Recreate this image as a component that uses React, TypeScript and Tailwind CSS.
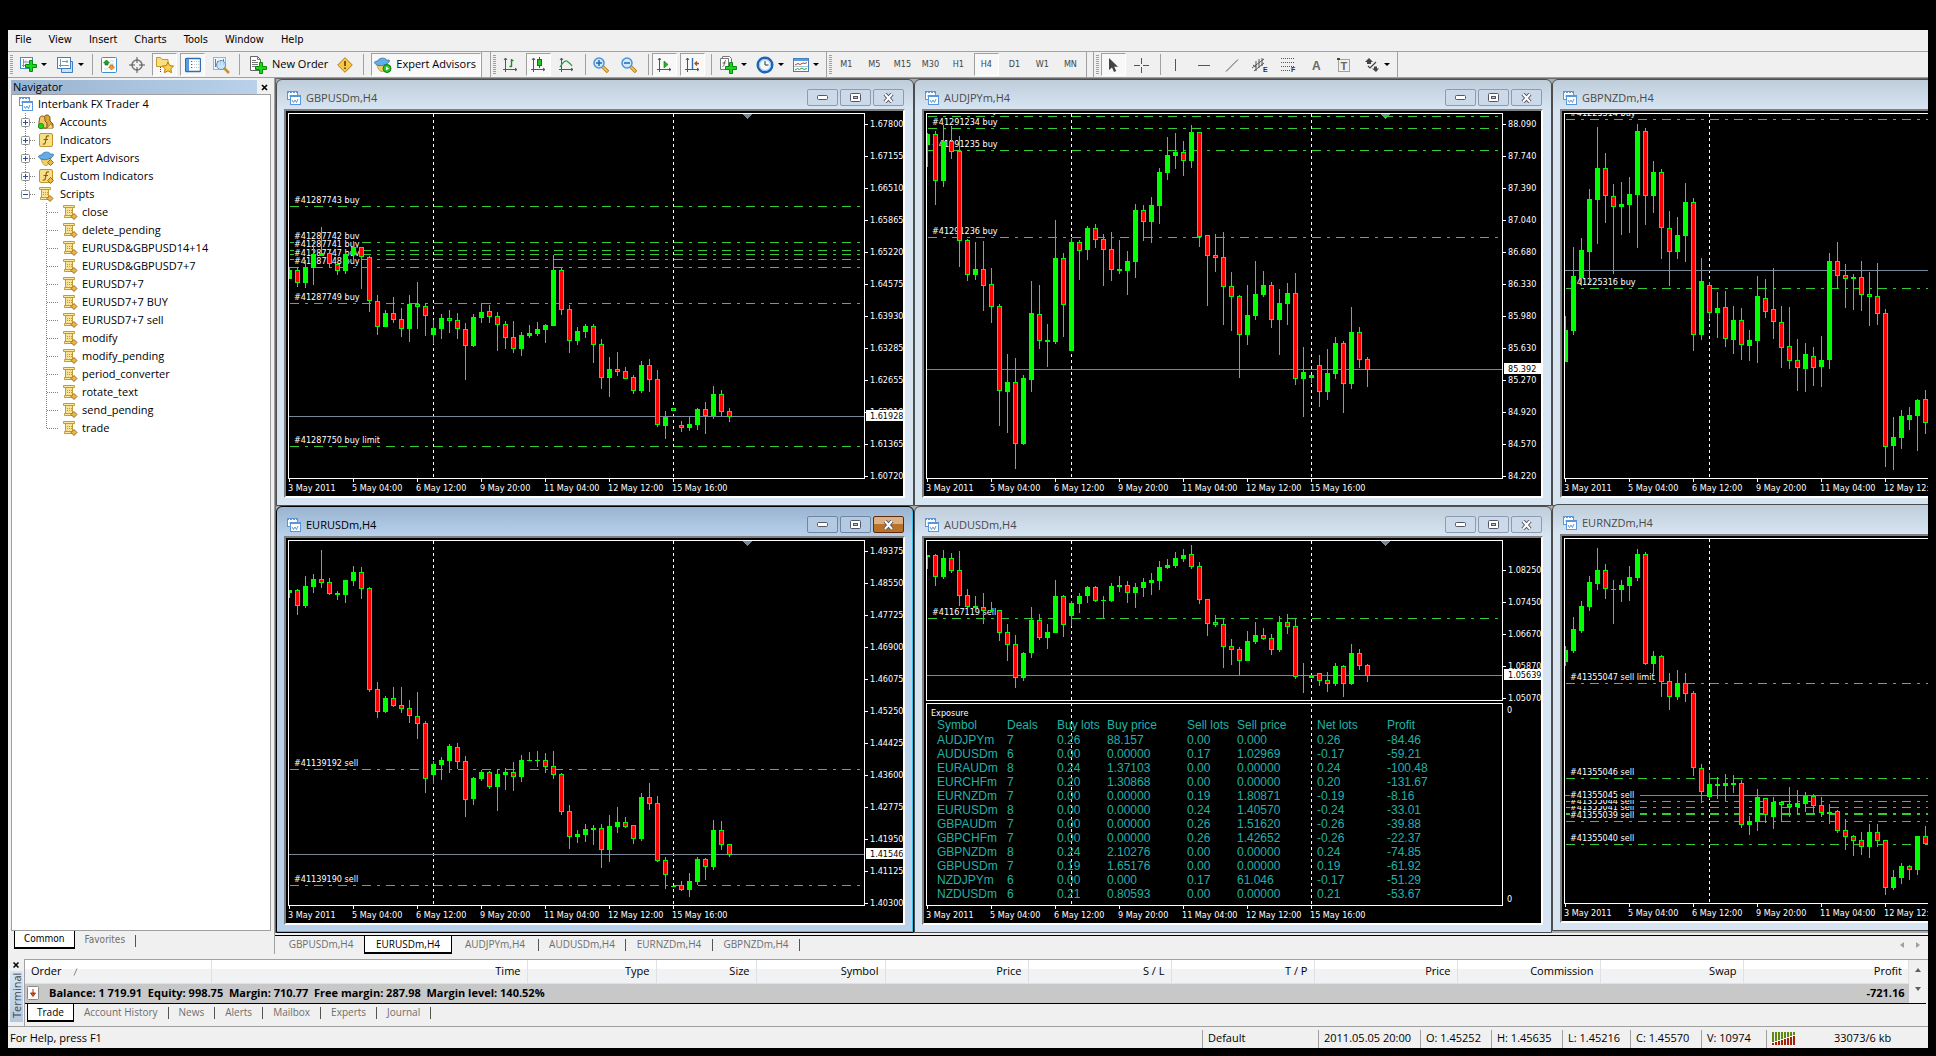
import React, { useState } from "react";

type Candle = [number, number, number, number, number];

type Order = { y: number; label?: string };

type ChartData = {
  symbol: string;
  origin: number;
  price: number;
  priceLabel?: string;
  scale: string[];
  scaleStart: number;
  orders: Order[];
  candles: Candle[];
  exposure?: boolean;
};

// Candle rows are [high, body top, body bottom, low, rising] in thirds of a pixel
const gbpusd: ChartData = {
  symbol: "GBPUSDm,H4",
  origin: 93,
  price: 1009,
  priceLabel: "1.61928",
  scale: ["1.67800", "1.67155", "1.66510", "1.65865", "1.65220", "1.64575", "1.63930", "1.63285", "1.62655", "1.62010", "1.61365", "1.60720"],
  scaleStart: 131,
  orders: [
    { y: 379, label: "#41287743 buy" },
    { y: 487, label: "#41287742 buy" },
    { y: 511, label: "#41287741 buy" },
    { y: 523 },
    { y: 538, label: "#41287747 buy" },
    { y: 562, label: "#41287748 buy" },
    { y: 670, label: "#41287749 buy" },
    { y: 1099, label: "#41287750 buy limit" },
  ],
  candles: [
    [562, 570, 597, 597, 1], [562, 570, 608, 620, 0], [540, 561, 608, 623, 1], [487, 522, 563, 614, 1],
    [441, 519, 527, 527, 1], [508, 519, 551, 563, 0], [545, 551, 574, 584, 0], [515, 522, 572, 581, 1],
    [484, 502, 524, 540, 1], [500, 502, 532, 627, 0], [528, 532, 664, 696, 0], [645, 664, 740, 766, 0],
    [690, 699, 740, 740, 1], [651, 699, 719, 729, 0], [684, 718, 746, 771, 0], [645, 672, 746, 786, 1],
    [606, 673, 681, 747, 0], [670, 679, 707, 768, 0], [720, 744, 765, 792, 1], [702, 714, 746, 777, 1],
    [690, 714, 722, 759, 0], [699, 720, 748, 777, 0], [729, 748, 797, 900, 0], [702, 711, 797, 800, 1],
    [670, 697, 713, 729, 1], [675, 693, 710, 729, 0], [697, 709, 734, 813, 0], [723, 733, 773, 807, 0],
    [723, 772, 808, 819, 0], [757, 766, 808, 828, 1], [735, 759, 767, 773, 1], [726, 747, 762, 768, 1],
    [732, 735, 750, 789, 1], [525, 570, 738, 738, 1], [563, 570, 689, 705, 0], [675, 688, 782, 819, 0],
    [741, 753, 782, 795, 1], [732, 738, 755, 774, 1], [732, 738, 794, 849, 0], [777, 793, 893, 927, 0],
    [831, 867, 893, 951, 1], [816, 867, 875, 887, 0], [861, 874, 896, 896, 0], [885, 891, 932, 942, 0],
    [843, 855, 932, 938, 1], [837, 855, 899, 936, 0], [870, 898, 1034, 1041, 0], [993, 1010, 1037, 1077, 1],
    [985, 985, 993, 993, 0], [1023, 1035, 1043, 1055, 0], [1010, 1033, 1043, 1053, 1], [984, 988, 1034, 1050, 1],
    [966, 988, 1007, 1062, 0], [918, 942, 1008, 1017, 1], [930, 942, 995, 1008, 0], [984, 993, 1010, 1025, 0],
  ],
};

const audjpy: ChartData = {
  symbol: "AUDJPYm,H4",
  origin: 93,
  price: 868,
  priceLabel: "85.392",
  scale: ["88.090", "87.740", "87.390", "87.040", "86.680", "86.330", "85.980", "85.630", "85.270", "84.920", "84.570", "84.220"],
  scaleStart: 131,
  orders: [
    { y: 109, label: "#41291233 buy" },
    { y: 145, label: "#41291234 buy" },
    { y: 211, label: "#41291235 buy" },
    { y: 472, label: "#41291236 buy" },
  ],
  candles: [
    [159, 162, 195, 261, 1], [152, 162, 302, 375, 0], [135, 183, 302, 320, 1], [137, 183, 215, 237, 0],
    [168, 212, 482, 561, 0], [477, 480, 584, 603, 0], [486, 567, 585, 600, 1], [483, 567, 617, 693, 0],
    [563, 612, 680, 729, 0], [672, 679, 932, 1038, 0], [822, 906, 936, 1059, 1], [834, 906, 1091, 1167, 0],
    [885, 894, 1091, 1095, 1], [603, 699, 900, 936, 1], [615, 703, 782, 807, 0], [732, 780, 787, 861, 1],
    [420, 534, 786, 792, 1], [519, 534, 674, 771, 0], [474, 486, 812, 812, 1], [480, 486, 512, 600, 0],
    [438, 444, 510, 540, 1], [432, 444, 479, 504, 0], [462, 477, 509, 618, 0], [456, 507, 570, 603, 0],
    [480, 567, 573, 582, 1], [513, 543, 573, 645, 1], [372, 390, 546, 594, 1], [375, 390, 426, 483, 0],
    [351, 375, 426, 489, 1], [264, 276, 378, 432, 1], [171, 225, 279, 300, 1], [159, 216, 228, 267, 1],
    [183, 216, 242, 288, 0], [135, 156, 242, 264, 1], [156, 156, 470, 501, 0], [464, 466, 527, 678, 0],
    [462, 525, 533, 576, 0], [456, 531, 620, 735, 0], [576, 618, 650, 753, 0], [645, 648, 765, 894, 0],
    [615, 705, 765, 795, 1], [543, 642, 708, 720, 1], [573, 615, 645, 651, 1], [606, 615, 719, 744, 0],
    [627, 669, 719, 825, 1], [609, 639, 671, 735, 1], [579, 639, 896, 915, 0], [801, 876, 896, 1011, 1],
    [885, 885, 894, 909, 1], [825, 855, 936, 981, 0], [807, 879, 936, 960, 1], [771, 789, 882, 897, 1],
    [783, 789, 911, 999, 0], [681, 756, 912, 927, 1], [741, 756, 839, 864, 0], [831, 838, 869, 921, 0],
  ],
};

const gbpnzd: ChartData = {
  symbol: "GBPNZDm,H4",
  origin: 93,
  price: 571,
  scale: [],
  scaleStart: 131,
  orders: [
    { y: 118, label: "#41225314 buy" },
    { y: 625, label: "#41225316 buy" },
  ],
  candles: [
    [708, 750, 846, 846, 1], [501, 588, 753, 765, 1], [474, 510, 594, 618, 1], [327, 357, 516, 606, 1],
    [141, 264, 360, 492, 1], [219, 264, 348, 429, 0], [312, 348, 381, 582, 0], [306, 372, 381, 465, 1],
    [291, 342, 375, 459, 1], [132, 153, 345, 504, 1], [144, 153, 348, 435, 0], [243, 276, 348, 399, 1],
    [267, 276, 444, 537, 0], [393, 444, 516, 618, 0], [411, 465, 516, 537, 1], [309, 366, 468, 546, 1],
    [354, 366, 765, 813, 0], [534, 603, 765, 780, 1], [606, 615, 699, 717, 0], [636, 684, 699, 774, 1],
    [633, 681, 777, 801, 0], [678, 720, 780, 822, 1], [684, 720, 795, 840, 0], [750, 780, 798, 843, 1],
    [588, 648, 783, 849, 1], [597, 654, 696, 714, 0], [564, 687, 726, 777, 0], [678, 726, 804, 864, 0],
    [681, 798, 843, 867, 0], [777, 840, 864, 933, 0], [789, 822, 867, 936, 1], [801, 828, 864, 918, 0],
    [768, 840, 861, 921, 1], [519, 543, 840, 867, 1], [486, 543, 588, 627, 0], [552, 585, 597, 684, 0],
    [582, 591, 597, 690, 1], [543, 591, 645, 693, 0], [576, 642, 651, 738, 0], [549, 648, 702, 735, 0],
    [687, 699, 1101, 1161, 0], [1011, 1071, 1098, 1170, 1], [990, 1008, 1074, 1107, 1], [981, 1005, 1020, 1050, 1],
    [957, 960, 1008, 1113, 1], [930, 957, 1029, 1062, 0],
  ],
};

const eurusd: ChartData = {
  symbol: "EURUSDm,H4",
  origin: 99,
  price: 1048,
  priceLabel: "1.41546",
  scale: ["1.49375", "1.48550", "1.47725", "1.46900", "1.46075", "1.45250", "1.44425", "1.43600", "1.42775", "1.41950", "1.41125", "1.40300"],
  scaleStart: 137,
  orders: [
    { y: 793, label: "#41139192 sell" },
    { y: 1141, label: "#41139190 sell" },
  ],
  candles: [
    [255, 255, 264, 279, 1], [252, 255, 302, 330, 0], [213, 243, 303, 309, 1], [207, 222, 246, 264, 1],
    [135, 222, 234, 249, 0], [219, 231, 267, 270, 0], [258, 264, 270, 285, 1], [225, 225, 270, 294, 1],
    [183, 201, 228, 243, 1], [186, 201, 251, 282, 0], [246, 249, 554, 561, 0], [531, 552, 620, 639, 0],
    [573, 579, 620, 624, 1], [546, 579, 602, 606, 0], [546, 600, 611, 624, 0], [585, 609, 633, 654, 0],
    [561, 633, 656, 702, 0], [648, 654, 822, 864, 0], [768, 777, 810, 837, 1], [756, 765, 780, 825, 1],
    [717, 723, 768, 804, 1], [714, 726, 770, 792, 0], [753, 768, 885, 936, 0], [816, 819, 882, 900, 1],
    [795, 801, 822, 828, 1], [798, 801, 846, 852, 0], [792, 807, 846, 918, 1], [789, 801, 810, 855, 1],
    [771, 801, 816, 858, 0], [750, 765, 816, 831, 1], [741, 765, 768, 768, 1], [738, 765, 768, 786, 1],
    [744, 765, 786, 804, 0], [738, 783, 810, 822, 0], [804, 807, 920, 930, 0], [900, 918, 996, 1032, 0],
    [975, 987, 996, 1014, 1], [957, 972, 990, 1011, 1], [960, 969, 975, 1020, 1], [957, 969, 1035, 1089, 0],
    [930, 963, 1035, 1071, 1], [906, 951, 966, 984, 1], [936, 951, 966, 969, 0], [960, 961, 1002, 1017, 0],
    [864, 876, 1002, 1008, 1], [834, 876, 896, 915, 0], [873, 894, 1067, 1071, 0], [1056, 1065, 1109, 1152, 0],
    [1143, 1143, 1146, 1146, 1], [1128, 1140, 1155, 1158, 0], [1104, 1128, 1155, 1176, 1], [1056, 1062, 1131, 1140, 1],
    [1059, 1062, 1086, 1125, 0], [945, 975, 1086, 1095, 1], [948, 975, 1020, 1035, 0], [1017, 1017, 1050, 1056, 0],
  ],
};

const audusd: ChartData = {
  symbol: "AUDUSDm,H4",
  origin: 99,
  price: 511,
  priceLabel: "1.05639",
  scale: ["1.08250", "1.07450", "1.06670", "1.05870", "1.05070"],
  scaleStart: 194,
  orders: [{ y: 340, label: "#41167119 sell" }],
  exposure: true,
  candles: [
    [150, 150, 156, 192, 1], [147, 150, 216, 243, 0], [135, 159, 216, 222, 1], [144, 159, 198, 204, 0],
    [138, 195, 273, 303, 0], [252, 270, 305, 309, 0], [273, 303, 309, 315, 1], [264, 306, 318, 357, 0],
    [291, 315, 318, 320, 1], [315, 315, 384, 408, 0], [357, 381, 420, 468, 0], [390, 417, 519, 549, 0],
    [441, 444, 519, 528, 1], [306, 345, 444, 459, 1], [327, 345, 399, 405, 0], [357, 381, 399, 432, 1],
    [225, 273, 384, 384, 1], [270, 273, 360, 396, 0], [288, 294, 333, 363, 1], [264, 273, 297, 324, 1],
    [243, 246, 273, 294, 1], [243, 246, 288, 291, 0], [273, 285, 288, 339, 1], [234, 243, 288, 291, 1],
    [213, 240, 246, 261, 1], [228, 240, 264, 294, 0], [234, 246, 264, 309, 1], [219, 231, 249, 276, 1],
    [204, 225, 234, 270, 1], [168, 186, 228, 255, 1], [162, 180, 189, 192, 1], [141, 159, 183, 189, 1],
    [132, 150, 162, 171, 1], [120, 147, 186, 192, 0], [171, 183, 285, 297, 0], [282, 282, 357, 393, 0],
    [330, 351, 360, 366, 0], [342, 357, 426, 489, 0], [402, 423, 435, 480, 0], [426, 432, 468, 510, 0],
    [378, 408, 468, 468, 1], [351, 390, 411, 417, 1], [369, 390, 402, 405, 0], [387, 399, 435, 450, 0],
    [333, 351, 435, 441, 1], [327, 351, 366, 387, 0], [339, 363, 516, 522, 0], [474, 510, 513, 564, 1],
    [513, 513, 519, 519, 1], [504, 504, 528, 543, 0], [501, 525, 537, 561, 0], [474, 483, 537, 543, 1],
    [480, 483, 537, 576, 0], [417, 444, 537, 540, 1], [432, 444, 483, 495, 0], [477, 480, 513, 531, 0],
  ],
};

const eurnzd: ChartData = {
  symbol: "EURNZDm,H4",
  origin: 93,
  price: 871,
  scale: [],
  scaleStart: 131,
  orders: [
    { y: 535, label: "#41355047 sell limit" },
    { y: 820, label: "#41355046 sell" },
    { y: 928 },
    { y: 925, label: "#41355041 sell" },
    { y: 907, label: "#41355044 sell" },
    { y: 889, label: "#41355045 sell" },
    { y: 949, label: "#41355039 sell" },
    { y: 1018, label: "#41355040 sell" },
  ],
  candles: [
    [423, 435, 471, 483, 1], [336, 372, 438, 444, 1], [288, 303, 378, 384, 1], [213, 231, 306, 318, 1],
    [129, 195, 237, 255, 1], [177, 195, 252, 282, 0], [225, 252, 255, 357, 1], [225, 240, 255, 291, 1],
    [183, 216, 243, 288, 1], [132, 147, 219, 228, 1], [141, 147, 477, 480, 0], [438, 453, 477, 507, 1],
    [450, 453, 531, 576, 0], [504, 528, 576, 615, 0], [495, 534, 576, 585, 1], [504, 534, 567, 591, 0],
    [558, 564, 789, 813, 0], [777, 789, 861, 894, 0], [804, 837, 876, 882, 1], [816, 837, 843, 882, 1],
    [807, 834, 843, 888, 1], [810, 834, 840, 864, 1], [825, 834, 960, 969, 0], [933, 948, 960, 990, 1],
    [852, 876, 951, 978, 1], [879, 879, 930, 954, 0], [876, 891, 936, 972, 1], [888, 891, 900, 951, 0],
    [846, 897, 906, 936, 0], [855, 894, 906, 930, 1], [861, 873, 897, 921, 1], [867, 873, 903, 924, 0],
    [876, 900, 924, 936, 0], [897, 921, 927, 957, 1], [915, 918, 978, 984, 0], [942, 975, 996, 1035, 0],
    [990, 993, 1008, 1053, 0], [981, 1005, 1026, 1050, 0], [957, 981, 1026, 1059, 1], [957, 981, 1008, 1026, 0],
    [1005, 1005, 1149, 1170, 0], [1095, 1116, 1149, 1155, 1], [1074, 1083, 1119, 1137, 1], [1080, 1083, 1095, 1125, 0],
    [993, 993, 1095, 1110, 1], [963, 993, 1017, 1020, 0],
  ],
};

const timeLabels = ["3 May 2011", "5 May 04:00", "6 May 12:00", "9 May 20:00", "11 May 04:00", "12 May 12:00", "15 May 16:00"];

const exposureHead = [
  ["Symbol", "w-[70px]"], ["Deals", "w-[50px]"], ["Buy lots", "w-[50px]"], ["Buy price", "w-[80px]"],
  ["Sell lots", "w-[50px]"], ["Sell price", "w-[80px]"], ["Net lots", "w-[70px]"], ["Profit", "w-[60px]"],
];

const exposureRows = [
  ["AUDJPYm", "7", "0.26", "88.157", "0.00", "0.000", "0.26", "-84.46"],
  ["AUDUSDm", "6", "0.00", "0.00000", "0.17", "1.02969", "-0.17", "-59.21"],
  ["EURAUDm", "8", "0.24", "1.37103", "0.00", "0.00000", "0.24", "-100.48"],
  ["EURCHFm", "7", "0.20", "1.30868", "0.00", "0.00000", "0.20", "-131.67"],
  ["EURNZDm", "7", "0.00", "0.00000", "0.19", "1.80871", "-0.19", "-8.16"],
  ["EURUSDm", "8", "0.00", "0.00000", "0.24", "1.40570", "-0.24", "-33.01"],
  ["GBPAUDm", "7", "0.00", "0.00000", "0.26", "1.51620", "-0.26", "-39.88"],
  ["GBPCHFm", "7", "0.00", "0.00000", "0.26", "1.42652", "-0.26", "-22.37"],
  ["GBPNZDm", "8", "0.24", "2.10276", "0.00", "0.00000", "0.24", "-74.85"],
  ["GBPUSDm", "7", "0.19", "1.65176", "0.00", "0.00000", "0.19", "-61.92"],
  ["NZDJPYm", "6", "0.00", "0.000", "0.17", "61.046", "-0.17", "-51.29"],
  ["NZDUSDm", "6", "0.21", "0.80593", "0.00", "0.00000", "0.21", "-53.67"],
];

/* ---------- icons ---------- */

function Svg({ size = 16, children }: { size?: number; children: React.ReactNode }) {
  return (
    <svg width={size} height={size} viewBox={`0 0 ${size} ${size}`} className="shrink-0 font-['Liberation_Sans',sans-serif]" aria-hidden="true">
      {children}
    </svg>
  );
}

const GreenPlus = ({ x, y }: { x: number; y: number }) => (
  <path d={`M${x + 4} ${y}h3v4h4v3h-4v4h-3v-4h-4v-3h4z`} fill="#19d819" stroke="#0a8a0a" />
);

const NewChartIcon = () => (
  <Svg size={18}>
    <rect x="1.5" y="1.5" width="12" height="11" fill="#fff" stroke="#4a8ac4" />
    <path d="M4.5 3v8M3 9.5h9M6 6h5M7 4.5l-1.5 1.5 1.5 1.5" fill="none" stroke="#7b93ab" />
    <GreenPlus x={6.5} y={4.5} />
  </Svg>
);

const ProfilesIcon = () => (
  <Svg size={18}>
    <path d="M5.5 5.5h11v11h-11z" fill="#cfe1f3" stroke="#3f7fbf" />
    <rect x="1.5" y="1.5" width="13" height="11" fill="#fff" stroke="#3f7fbf" />
    <path d="M4.5 3v8M3 9.5h10M6 5.5h6M11 4v3" fill="none" stroke="#7b93ab" />
  </Svg>
);

const MarketWatchIcon = () => (
  <Svg>
    <rect x="0.5" y="0.5" width="15" height="15" rx="1" fill="#fff" stroke="#3f8fd0" />
    <path d="M3 4h4M3 12h4M9 4h4M9 7h4" stroke="#cfd8e0" />
    <path d="M5.5 3l3 3h-1.5v2h-3v-2h-1.5z" fill="#19a819" stroke="#0b6b0b" strokeWidth="0.6" />
    <path d="M10.5 13l-3-3h1.5v-2h3v2h1.5z" fill="#f0a030" stroke="#a8580c" strokeWidth="0.6" />
  </Svg>
);

const TargetIcon = () => (
  <Svg>
    <circle cx="8" cy="8" r="5" fill="none" stroke="#777" strokeWidth="1.5" />
    <path d="M8 0v6M8 10v6M0 8h6M10 8h6" stroke="#555" />
  </Svg>
);

const FolderStarIcon = () => (
  <Svg size={20}>
    <path d="M1.5 11.5v-9h4l1.5 2h6v7z" fill="#f7df82" stroke="#c79a2c" />
    <path d="M5.5 12v6" stroke="#444" strokeDasharray="1 1" />
    <path d="M13 7l1.7 3.6 3.9.5-2.8 2.7.7 3.9-3.5-1.9-3.5 1.9.7-3.9-2.8-2.7 3.9-.5z" fill="#fbd14c" stroke="#b97a14" />
  </Svg>
);

const TerminalIcon = () => (
  <Svg>
    <rect x="0.5" y="1.5" width="15" height="13" rx="1" fill="#fff" stroke="#2f6eb5" strokeWidth="1.4" />
    <rect x="1" y="2" width="3" height="12" fill="#5b9be0" />
    <path d="M7 4.5h7M7 7.5h7M7 10.5h7" stroke="#c3cad2" strokeDasharray="1 1" />
    <path d="M6 4.5h1M6 7.5h1M6 10.5h1" stroke="#d22" />
  </Svg>
);

const TesterIcon = () => (
  <Svg size={18}>
    <rect x="1.5" y="1.5" width="12" height="12" fill="#eef3f8" stroke="#9fb4c8" />
    <path d="M3.5 3v8M5.5 5v5M8.5 4v5M11.5 3v6" stroke="#6a7f94" />
    <path d="M12 12l5 5" stroke="#c8912a" strokeWidth="2.5" />
    <circle cx="9" cy="9" r="4.5" fill="#bfe0f7" fillOpacity="0.8" stroke="#5c98c8" />
  </Svg>
);

const NewOrderIcon = () => (
  <Svg size={18}>
    <path d="M1.5 0.5h7l3 3v11h-10z" fill="#fff" stroke="#666" />
    <path d="M8.5 0.5v3h3M3 4.5h4M3 6.5h6M3 8.5h6M3 10.5h4" fill="none" stroke="#777" />
    <GreenPlus x={6.5} y={6.5} />
  </Svg>
);

const WarningIcon = () => (
  <Svg>
    <path d="M8 0.7l7.3 7.3-7.3 7.3-7.3-7.3z" fill="#f6c646" stroke="#b07c15" />
    <path d="M8 4v5M8 10.5v1.5" stroke="#5c3c00" strokeWidth="1.6" />
  </Svg>
);

const Hat = () => (
  <>
    <path d="M3 8.5c1 5 3 7 5 7s4.5-3 5-7z" fill="#f5cf66" stroke="#b98a20" strokeWidth="0.8" />
    <path d="M0.5 6.5c1 3 5 3.5 8 3s7-2.5 7-5c-1-1-3 0-3 0 0-3-8-3.5-8.5.5-1.5 0-3.5.5-3.5 1.5z" fill="#63aee6" stroke="#2a6ca8" strokeWidth="0.8" />
  </>
);

const AdvisorsIcon = () => (
  <Svg size={18}>
    <Hat />
    <circle cx="13" cy="12.5" r="4" fill="#2fc22f" stroke="#0b7a0b" />
    <path d="M12 10.5l3 2-3 2z" fill="#fff" />
  </Svg>
);

const Axes = () => (
  <path d="M3.5 1v14M1 12.5h14M2 3l1.5-2 1.5 2M13 11l2 1.5-2 1.5" fill="none" stroke="#555" />
);

const BarChartIcon = () => (
  <Svg>
    <Axes />
    <path d="M9.5 2v8M9.5 3.5h2M7.5 9.5h2" stroke="#149414" strokeWidth="1.4" fill="none" />
  </Svg>
);

const CandleChartIcon = () => (
  <Svg>
    <Axes />
    <path d="M9.5 0v11" stroke="#0b7a0b" />
    <rect x="7.5" y="2.5" width="4" height="6" fill="#22c322" stroke="#0b7a0b" />
  </Svg>
);

const LineChartIcon = () => (
  <Svg>
    <Axes />
    <path d="M2 10c3-5 6-8 8-5 1.5 1.5 3 2 4 4" fill="none" stroke="#2f9a4f" strokeWidth="1.3" />
  </Svg>
);

const ZoomIcon = ({ plus }: { plus?: boolean }) => (
  <Svg>
    <path d="M10 10l5 5" stroke="#a8741a" strokeWidth="3.4" />
    <path d="M10 10l4.5 4.5" stroke="#f3c254" strokeWidth="1.8" />
    <circle cx="6" cy="6" r="5" fill="#cfe8fb" stroke="#4a94d2" strokeWidth="1.5" />
    <path d={plus ? "M3 6h6M6 3v6" : "M3 6h6"} stroke="#2568a8" strokeWidth="1.5" />
  </Svg>
);

const AutoScrollIcon = () => (
  <Svg>
    <Axes />
    <path d="M8 4l4 3.5-4 3.5z" fill="#22b422" stroke="#0b7a0b" strokeWidth="0.6" />
  </Svg>
);

const ChartShiftIcon = () => (
  <Svg>
    <Axes />
    <path d="M8.5 1v11" stroke="#2f6eb5" strokeWidth="1.4" />
    <path d="M15 6.5h-4M13 4.5l-2 2 2 2" stroke="#b5481a" strokeWidth="1.3" fill="none" />
  </Svg>
);

const IndicatorsIcon = () => (
  <Svg size={18}>
    <path d="M3.5 0.5h7l2 2v10h-9z" fill="#fff" stroke="#777" />
    <path d="M1.5 2.5h8v11h-8z" fill="#fff" stroke="#777" />
    <path d="M7 4.5c-2-.5-1 6-3.5 6M3.5 7h3" stroke="#555" fill="none" />
    <GreenPlus x={6.5} y={6.5} />
  </Svg>
);

const ClockIcon = () => (
  <Svg size={18}>
    <circle cx="9" cy="9" r="7.3" fill="#f4f9fe" stroke="#1f63b4" strokeWidth="2.4" />
    <circle cx="9" cy="9" r="5.5" fill="none" stroke="#8fc0ee" />
    <path d="M9 5v4h3.5" stroke="#333" fill="none" />
  </Svg>
);

const TemplateIcon = () => (
  <Svg>
    <rect x="0.5" y="1.5" width="15" height="13" fill="#fff" stroke="#3f7fbf" />
    <path d="M1 2h14v2h-14z" fill="#5b9be0" />
    <path d="M2 8l3-1.5 2 1 3-1.5 2 .5 2-1" stroke="#a8481a" fill="none" />
    <path d="M1 9.5h14" stroke="#a9c4e0" />
    <path d="M2 13l2.5-1.5 2 1 2.5-1.5 2 1.5 3-1" stroke="#2f9a4f" fill="none" />
  </Svg>
);

const CursorIcon = () => (
  <Svg>
    <path d="M4 1v12l3-2.5 2 4.5 2.2-1-2-4.3h3.8z" fill="#444" />
  </Svg>
);

const CrosshairIcon = () => (
  <Svg>
    <path d="M8.5 1v6M8.5 10v6M1 8.5h6M10 8.5h6" stroke="#555" />
  </Svg>
);

const VLineIcon = () => (
  <Svg>
    <path d="M7.5 2v12" stroke="#555" />
  </Svg>
);

const HLineIcon = () => (
  <Svg>
    <path d="M2 8.5h12" stroke="#555" />
  </Svg>
);

const TrendIcon = () => (
  <Svg>
    <path d="M2 14.5l12-12" stroke="#555" />
  </Svg>
);

const ChannelIcon = () => (
  <Svg>
    <path d="M0 11l12-9M2 14l10-8M4 4v10M7 2v9M10 1v8M1 8l3 2" stroke="#555" fill="none" />
    <text x="11" y="15" fontSize="7" fontWeight="bold" fill="#333">E</text>
  </Svg>
);

const FiboIcon = () => (
  <Svg>
    <path d="M1 1.5h14M1 5.5h14M1 9.5h14M1 13.5h9" stroke="#555" strokeDasharray="1 1" />
    <text x="11" y="15" fontSize="7" fontWeight="bold" fill="#333">F</text>
  </Svg>
);

const TextIcon = () => (
  <Svg>
    <text x="4" y="13" fontSize="12" fontWeight="bold" fill="#666">A</text>
  </Svg>
);

const TextLabelIcon = () => (
  <Svg>
    <rect x="2.5" y="2.5" width="11" height="12" fill="none" stroke="#555" strokeDasharray="1 1" />
    <rect x="1" y="1" width="3" height="2" fill="#444" />
    <text x="4.5" y="13" fontSize="11" fontWeight="bold" fill="#666">T</text>
  </Svg>
);

const ShapesIcon = () => (
  <Svg>
    <path d="M5 1l4 4h-2v2h-4v-2h-2zM12 15l-4-3.5h2v-2h3v2h2z" fill="#444" />
    <path d="M4 9l2 2 6-6" stroke="#444" fill="none" strokeWidth="1.2" />
  </Svg>
);

const ChartWindowIcon = () => (
  <Svg>
    <rect x="1.5" y="1.5" width="10" height="8" fill="#fff" stroke="#5b96d8" />
    <path d="M1 2h11" stroke="#5b96d8" strokeWidth="2" strokeDasharray="2 1" />
    <path d="M3 6h2l1-1 1 2" stroke="#8fb6e4" fill="none" />
    <rect x="4.5" y="5.5" width="10" height="9" fill="#fff" stroke="#5b96d8" />
    <path d="M4 6h11" stroke="#5b96d8" strokeWidth="2" />
    <path d="M6 10l1.5 2.5 1.5-2.5 1.5 2.5 1.5-3.5" stroke="#5b96d8" fill="none" />
  </Svg>
);

const AccountsIcon = () => (
  <Svg>
    <path d="M6 4c0-4 6-4 6 0v3l3 3v4h-10v-5z" fill="#d9a53c" stroke="#7d5510" />
    <path d="M1.5 5c0-4 5.5-4 5.5 0v2l2 2v5h-8v-6z" fill="#edc865" stroke="#7d5510" />
    <path d="M9 14.5l4-5 2 4" fill="#f5dd93" stroke="#9a7020" strokeWidth="0.7" />
    <circle cx="3" cy="12" r="2.7" fill="#1fd01f" stroke="#0a8a0a" strokeWidth="0.7" />
  </Svg>
);

const Gem = ({ x, y }: { x: number; y: number }) => (
  <path d={`M${x} ${y - 3}l3 3-3 3-3-3z`} fill="#e8b64a" stroke="#946512" strokeWidth="0.9" />
);

const FunctionIcon = ({ custom }: { custom?: boolean }) => (
  <Svg>
    <rect x="1.5" y="1.5" width="13" height="13" rx="1.5" fill="#f8e08a" stroke="#c2962c" />
    <path d="M11 4c-3-1-2.8 1.5-3.3 4.5s-.7 4-3 3.5M5.5 7.5h4.5" fill="none" stroke="#8a5e0c" strokeWidth="1.2" />
    {custom && <Gem x={12.5} y={12.5} />}
  </Svg>
);

const AdvisorTreeIcon = () => (
  <Svg>
    <Hat />
    <Gem x={12.5} y={12.5} />
  </Svg>
);

const ScriptIcon = () => (
  <Svg>
    <path d="M3.5 3.5h7v8h-7z" fill="#f9e294" stroke="#c39a34" />
    <path d="M1.5 1.5h11v2h-11zM2.5 11.5h9v2h-9z" fill="#fbe9a6" stroke="#c39a34" />
    <path d="M5 6.5h5M5 8.5h5" stroke="#c39a34" strokeDasharray="1 1" />
    <Gem x={12} y={12.5} />
  </Svg>
);

/* ---------- toolbar ---------- */

function ToolButton({ label, pressed, dropdown, children }: { label: string; pressed?: boolean; dropdown?: boolean; children: React.ReactNode }) {
  const look = pressed ? "border-[#a0a0a0] border-r-white border-b-white bg-[#f8f8f8]" : "border-transparent";
  return (
    <button aria-label={label} className={`mr-[3px] flex h-[23px] items-center border ${look} ${dropdown ? "w-[34px] gap-1 pl-[3px]" : "w-[25px] justify-center"}`}>
      {children}
      {dropdown && <span className="border-x-[3px] border-t-[3px] border-x-transparent border-t-black" />}
    </button>
  );
}

const Separator = () => <div className="mx-[3px] h-[21px] w-px bg-[#a0a0a0]" />;

function ToolGroup({ children }: { children: React.ReactNode }) {
  return (
    <div className="flex h-[25px] items-center border-r border-[#a0a0a0] pl-0.5">
      <div className="mr-0.5 h-[19px] w-[3px] bg-[repeating-linear-gradient(#a0a0a0_0_1px,transparent_1px_2px)]" />
      {children}
    </div>
  );
}

function Toolbar() {
  const [frame, setFrame] = useState("H4");
  return (
    <div className="flex items-center border-y border-[#a0a0a0]">
      <ToolGroup>
        <ToolButton label="New chart" dropdown><NewChartIcon /></ToolButton>
        <ToolButton label="Profiles" dropdown><ProfilesIcon /></ToolButton>
        <Separator />
        <ToolButton label="Market watch"><MarketWatchIcon /></ToolButton>
        <ToolButton label="Data window"><TargetIcon /></ToolButton>
        <ToolButton label="Navigator" pressed><FolderStarIcon /></ToolButton>
        <ToolButton label="Terminal" pressed><TerminalIcon /></ToolButton>
        <ToolButton label="Strategy tester"><TesterIcon /></ToolButton>
        <Separator />
        <button className="flex h-[23px] items-center gap-[5px] pr-1 pl-1.5 text-[11px]">
          <NewOrderIcon /> New Order
        </button>
        <ToolButton label="MetaEditor"><WarningIcon /></ToolButton>
        <Separator />
        <button className="ml-1 flex h-[23px] items-center gap-1 border border-[#a0a0a0] border-r-white border-b-white bg-[#f8f8f8] pr-1 pl-0.5 text-[11px]">
          <AdvisorsIcon /> Expert Advisors
        </button>
      </ToolGroup>
      <div className="ml-2 border-l border-[#a0a0a0]">
        <ToolGroup>
          <ToolButton label="Bar chart"><BarChartIcon /></ToolButton>
          <ToolButton label="Candlesticks" pressed><CandleChartIcon /></ToolButton>
          <ToolButton label="Line chart"><LineChartIcon /></ToolButton>
          <Separator />
          <ToolButton label="Zoom in"><ZoomIcon plus /></ToolButton>
          <ToolButton label="Zoom out"><ZoomIcon /></ToolButton>
          <Separator />
          <ToolButton label="Auto scroll" pressed><AutoScrollIcon /></ToolButton>
          <ToolButton label="Chart shift" pressed><ChartShiftIcon /></ToolButton>
          <Separator />
          <ToolButton label="Indicators" dropdown><IndicatorsIcon /></ToolButton>
          <ToolButton label="Periodicity" dropdown><ClockIcon /></ToolButton>
          <ToolButton label="Templates" dropdown><TemplateIcon /></ToolButton>
        </ToolGroup>
      </div>
      <ToolGroup>
        {["M1", "M5", "M15", "M30", "H1", "H4", "D1", "W1", "MN"].map((f) => (
          <button
            key={f}
            onClick={() => setFrame(f)}
            className={`mr-[3px] h-[23px] w-[25px] border text-center font-['DejaVu_Sans_Condensed','Open_Sans',sans-serif] text-[9px] text-[#444] ${
              f === frame ? "border-[#a0a0a0] border-r-white border-b-white bg-[#f8f8f8]" : "border-transparent"
            }`}
          >
            {f}
          </button>
        ))}
      </ToolGroup>
      <div className="ml-1.5 border-l border-[#a0a0a0]">
        <ToolGroup>
          <ToolButton label="Cursor" pressed><CursorIcon /></ToolButton>
          <ToolButton label="Crosshair"><CrosshairIcon /></ToolButton>
          <Separator />
          <ToolButton label="Vertical line"><VLineIcon /></ToolButton>
          <ToolButton label="Horizontal line"><HLineIcon /></ToolButton>
          <ToolButton label="Trendline"><TrendIcon /></ToolButton>
          <ToolButton label="Equidistant channel"><ChannelIcon /></ToolButton>
          <ToolButton label="Fibonacci retracement"><FiboIcon /></ToolButton>
          <ToolButton label="Text"><TextIcon /></ToolButton>
          <ToolButton label="Text label"><TextLabelIcon /></ToolButton>
          <ToolButton label="Arrows" dropdown><ShapesIcon /></ToolButton>
        </ToolGroup>
      </div>
    </div>
  );
}

/* ---------- navigator ---------- */

const branches = [
  { name: "Accounts", icon: <AccountsIcon /> },
  { name: "Indicators", icon: <FunctionIcon /> },
  { name: "Expert Advisors", icon: <AdvisorTreeIcon /> },
  { name: "Custom Indicators", icon: <FunctionIcon custom /> },
  { name: "Scripts", icon: <ScriptIcon />, open: true },
];

const scripts = [
  "close", "delete_pending", "EURUSD&GBPUSD14+14", "EURUSD&GBPUSD7+7", "EURUSD7+7", "EURUSD7+7 BUY", "EURUSD7+7 sell",
  "modify", "modify_pending", "period_converter", "rotate_text", "send_pending", "trade",
];

function Expander({ open }: { open?: boolean }) {
  return (
    <svg width="18" height="18" viewBox="0 0 18 18" className="shrink-0">
      <path d={open ? "M5.5 0v9M10 9.5h6" : "M5.5 0v18M10 9.5h6"} stroke="#808080" strokeDasharray="1 1" />
      <rect x="1.5" y="5.5" width="8" height="8" rx="1" fill="#fff" stroke="#919191" />
      <path d={open ? "M3 9.5h5" : "M3 9.5h5M5.5 7v5"} stroke="#2b4f94" />
    </svg>
  );
}

function Navigator() {
  return (
    <aside className="flex w-[267px] shrink-0 flex-col border-r border-[#a0a0a0] pt-0.5">
      <div className="flex items-center pr-1.5 pl-[3px]">
        <h2 className="h-[14px] flex-1 bg-gradient-to-r from-[#99b4d1] to-[#b9d1ea] pl-0.5 text-[11px] leading-[14px]">Navigator</h2>
        <button aria-label="Close navigator" className="ml-1">
          <svg width="7" height="7" viewBox="0 0 7 7"><path d="M1 1l5 5M6 1l-5 5" stroke="#000" strokeWidth="1.6" /></svg>
        </button>
      </div>
      <div className="mx-[3px] flex-1 border border-[#a0a0a0] bg-white">
        <ul className="pl-1.5 text-[11px] leading-[18px]">
          <li className="flex h-[18px] items-center gap-1"><ChartWindowIcon /> Interbank FX Trader 4</li>
          {branches.map((b) => (
            <li key={b.name} className="flex h-[18px] items-center pl-0.5">
              <Expander open={b.open} />
              <span className="mr-1.5">{b.icon}</span>
              {b.name}
            </li>
          ))}
          {scripts.map((s, i) => (
            <li key={s} className="flex h-[18px] items-center gap-1 pl-7">
              <svg width="12" height="18" viewBox="0 0 12 18">
                <path d={i === scripts.length - 1 ? "M0.5 0v9M1 9.5h11" : "M0.5 0v18M1 9.5h11"} stroke="#808080" strokeDasharray="1 1" />
              </svg>
              <ScriptIcon />
              {s}
            </li>
          ))}
        </ul>
      </div>
      <div className="flex h-[23px] items-start pl-1.5 font-['DejaVu_Sans_Condensed','Open_Sans',sans-serif] text-[10px] text-[#6e6e6e]">
        <button className="h-[18px] border-x border-b-2 border-black bg-white px-[9px] leading-4 text-black">Common</button>
        <button className="px-2.5 leading-[18px]">Favorites</button>
        <span className="mt-1 h-3 w-px bg-[#555]" />
      </div>
    </aside>
  );
}

/* ---------- chart windows ---------- */

function Chart({ data }: { data: ChartData }) {
  const y = (v: number) => Math.round((v - data.origin) / 3);
  const bottom = data.exposure ? 162 : 367;
  return (
    <div className="relative">
      <svg
        width="617"
        height="385"
        viewBox="0 0 617 385"
        className="block bg-black font-['DejaVu_Sans_Condensed','Open_Sans',sans-serif]"
        shapeRendering="crispEdges"
        fontSize="9"
        fill="#fff"
      >
        <path d={`M2.5 2.5h576v${bottom - 2}h-576z`} fill="none" stroke="#fff" />
        {data.exposure && <path d="M2.5 165.5h576v202h-576z" fill="none" stroke="#fff" />}
        {timeLabels.map((t, i) => (
          <g key={t}>
            <path d={`M${3.5 + i * 64} 368v3`} stroke="#fff" />
            <text x={2 + i * 64} y="380">{t}</text>
          </g>
        ))}
        {data.scale.map((s, i) => (
          <g key={s}>
            <path d={`M579 ${y(data.scaleStart + i * 96) + 0.5}h3`} stroke="#fff" />
            <text x="584" y={y(data.scaleStart + i * 96) + 3}>{s}</text>
          </g>
        ))}
        <path d="M147.5 3v364M387.5 3v364" stroke="#fff" strokeDasharray="3 3" />
        <path d="M457 3h9l-4.5 5z" fill="#778899" />
        <svg x="3" y="3" width="575" height={bottom - 3} viewBox={`3 3 575 ${bottom - 3}`}>
          <path d={`M3 ${y(data.price) + 0.5}h576`} stroke="#778899" />
          {data.orders.map((o) => (
            <path key={o.y} d={`M4 ${y(o.y) + 0.5}h570`} stroke="#32cd32" strokeDasharray="9 6 3 6" />
          ))}
          {data.orders.map((o) =>
            o.label ? (
              <g key={o.y}>
                <rect x="8" y={y(o.y) - 11} width={o.label.length * 5} height="10" fill="#000" />
                <text x="8" y={y(o.y) - 3}>{o.label}</text>
              </g>
            ) : null
          )}
          {data.candles.map(([high, top, low, end, rising], i) => {
            const x = 1 + i * 8;
            const h = Math.max(1, y(low) - y(top));
            return (
              <g key={i}>
                <path d={`M${x + 2.5} ${y(high)}V${y(end)}`} stroke="#00ff00" />
                {rising ? (
                  <rect x={x} y={y(top)} width="5" height={h} fill="#00ff00" />
                ) : (
                  <rect x={x + 0.5} y={y(top) + 0.5} width="4" height={Math.max(1, h - 1)} fill="#ff0000" stroke="#00ff00" />
                )}
              </g>
            );
          })}
        </svg>
        {data.priceLabel && (
          <>
            <rect x="580" y={y(data.price) - 6} width="37" height="11" fill="#fff" />
            <text x="584" y={y(data.price) + 3} fill="#000">{data.priceLabel}</text>
          </>
        )}
        {data.exposure && (
          <>
            <text x="583" y="175">0</text>
            <text x="583" y="364">0</text>
            <text x="7" y="178">Exposure</text>
          </>
        )}
      </svg>
      {data.exposure && (
        <table className="absolute top-[180px] left-[13px] table-fixed font-['Liberation_Sans',sans-serif] text-[12px] leading-[14px] text-[#20b2aa]">
          <thead>
            <tr className="text-left">
              {exposureHead.map(([h, width]) => (
                <th key={h} className={`h-[15px] p-0 align-top font-normal whitespace-nowrap ${width}`}>{h}</th>
              ))}
            </tr>
          </thead>
          <tbody>
            {exposureRows.map((r) => (
              <tr key={r[0]}>
                {r.map((c, i) => <td key={i} className="p-0">{c}</td>)}
              </tr>
            ))}
          </tbody>
        </table>
      )}
    </div>
  );
}

function ChartWindow({ data, active, raised }: { data: ChartData; active?: boolean; raised?: boolean }) {
  const button = "flex h-[17px] w-[31px] items-center justify-center rounded-xs border";
  const plain = `${button} ${active ? "border-[#6f86a3] bg-[#b4cae2]" : "border-[#8c9bb3] bg-[#cbd9e8]"}`;
  const close = active ? `${button} border-[#5f2a0c] bg-gradient-to-b from-[#dcb184] from-50% to-[#b8722a] to-50%` : plain;
  return (
    <section
      className={`relative h-[427px] w-[638px] rounded-t-md border px-[7px] ${
        active
          ? "border-black bg-[linear-gradient(#99b4d1,#b9d1ea_29px)] shadow-[inset_-1px_-1px_#33c5ea]"
          : "border-[#4d4d4d] bg-[linear-gradient(#bfcddb,#d7e4f2_29px)]"
      } ${raised ? "-mt-0.5" : ""}`}
    >
      <header className="flex h-[29px] items-center gap-0.5 pt-1.5 pr-0.5 pl-0.5">
        <ChartWindowIcon />
        <h3 className={`ml-0.5 flex-1 text-[11px] leading-4 ${active ? "text-black" : "text-[#4a4a4a]"}`}>{data.symbol}</h3>
        <button aria-label="Minimize" className={plain}>
          <svg width="11" height="5" viewBox="0 0 11 5"><rect x="0.5" y="0.5" width="10" height="4" rx="1" fill="#fff" stroke="#535666" /></svg>
        </button>
        <button aria-label="Maximize" className={plain}>
          <svg width="11" height="9" viewBox="0 0 11 9">
            <rect x="0.5" y="0.5" width="10" height="8" rx="1" fill="#fff" stroke="#535666" />
            <rect x="3.5" y="3.5" width="4" height="2" fill="#b4c6da" stroke="#535666" />
          </svg>
        </button>
        <button aria-label="Close" className={close}>
          <svg width="13" height="10" viewBox="0 0 13 10">
            <path d="M3 1l7 8M10 1l-7 8" stroke="#535666" strokeWidth="4" />
            <path d="M3 1l7 8M10 1l-7 8" stroke="#fff" strokeWidth="2" />
          </svg>
        </button>
      </header>
      <div className="w-[621px] border-2 border-t-[#808080] border-r-white border-b-white border-l-[#808080]">
        <Chart data={data} />
      </div>
    </section>
  );
}

function Workspace() {
  const tabs = ["GBPUSDm,H4", "EURUSDm,H4", "AUDJPYm,H4", "AUDUSDm,H4", "EURNZDm,H4", "GBPNZDm,H4"];
  const [tab, setTab] = useState("EURUSDm,H4");
  return (
    <main className="flex min-w-0 flex-1 flex-col">
      <div className="flex flex-1 overflow-hidden border-t border-l border-[#696969] bg-[#ababab]">
        <div className="shrink-0">
          <ChartWindow data={gbpusd} />
          <ChartWindow data={eurusd} active />
        </div>
        <div className="shrink-0">
          <ChartWindow data={audjpy} />
          <ChartWindow data={audusd} />
        </div>
        <div className="shrink-0">
          <ChartWindow data={gbpnzd} />
          <ChartWindow data={eurnzd} raised />
        </div>
      </div>
      <div className="mt-0.5 flex h-[19px] items-start border-t border-black pl-[3px] text-[10px] text-[#6e6e6e]">
        {tabs.map((t, i) => (
          <React.Fragment key={t}>
            <button
              onClick={() => setTab(t)}
              className={t === tab ? "h-[18px] w-[88px] border-x border-b-2 border-black bg-white leading-4 text-black" : "w-[86px] leading-4"}
            >
              {t}
            </button>
            {i > 1 && <span className="mt-[3px] h-3 w-px bg-[#555]" />}
          </React.Fragment>
        ))}
        <div className="ml-auto flex gap-3 pt-1.5 pr-2">
          <button aria-label="Scroll tabs left" className="border-y-[3px] border-r-[4px] border-y-transparent border-r-[#a0a0a0]" />
          <button aria-label="Scroll tabs right" className="border-y-[3px] border-l-[4px] border-y-transparent border-l-[#a0a0a0]" />
        </div>
      </div>
    </main>
  );
}

/* ---------- terminal ---------- */

const columns = [
  ["Order", "w-[186px]"], ["Time", "w-[316px]"], ["Type", "w-[129px]"], ["Size", "w-[100px]"], ["Symbol", "w-[129px]"], ["Price", "w-[143px]"],
  ["S / L", "w-[143px]"], ["T / P", "w-[143px]"], ["Price", "w-[143px]"], ["Commission", "w-[143px]"], ["Swap", "w-[143px]"], ["Profit", ""],
];

function Terminal() {
  const [tab, setTab] = useState("Trade");
  return (
    <section className="mt-[5px] flex">
      <div className="flex w-4 flex-col items-center pb-1">
        <button aria-label="Close terminal" className="flex h-3 items-center">
          <svg width="6" height="6" viewBox="0 0 6 6"><path d="M0.5 0.5l5 5M5.5 0.5l-5 5" stroke="#000" strokeWidth="1.5" /></svg>
        </button>
        <h2 className="flex-1 rotate-180 bg-gradient-to-b from-[#b4c8de] to-[#d6e6f5] pt-1 text-[11px] leading-[13px] text-[#444] [writing-mode:vertical-rl]">Terminal</h2>
      </div>
      <div className="min-w-0 flex-1 border-t border-l border-[#a0a0a0] pb-1">
        <div className="mr-0.5 flex border-b border-black">
          <table className="flex-1 table-fixed border-collapse text-[11px] leading-4">
            <thead>
              <tr className="h-[23px] bg-gradient-to-b from-white from-40% to-[#f1f2f4] to-40%">
                {columns.map(([name, width], i) => (
                  <th key={i} className={`border-r border-b border-[#dfe1e4] px-1.5 py-0 font-normal ${width} ${i === 0 ? "text-left" : "text-right"}`}>
                    {name}
                    {i === 0 && (
                      <svg width="8" height="8" viewBox="0 0 8 8" className="ml-3 inline"><path d="M1 7.5l3-7" stroke="#888" /></svg>
                    )}
                  </th>
                ))}
              </tr>
            </thead>
            <tbody>
              <tr className="h-5 bg-[#c8c8c8] font-bold">
                <td colSpan={11} className="py-0 pl-0.5">
                  <div className="flex items-center gap-2.5">
                    <svg width="12" height="14" viewBox="0 0 12 14">
                      <rect x="0.5" y="0.5" width="11" height="13" rx="1" fill="#fff" stroke="#888" />
                      <path d="M6 3v5M3.5 7l2.5 3.5 2.5-3.5z" fill="#d9531e" stroke="#a8380c" />
                    </svg>
                    <span className="whitespace-pre">Balance: 1 719.91  Equity: 998.75  Margin: 710.77  Free margin: 287.98  Margin level: 140.52%</span>
                  </div>
                </td>
                <td className="py-0 pr-1 text-right">-721.16</td>
              </tr>
            </tbody>
          </table>
          <div className="flex w-[17px] flex-col items-center justify-between bg-[#f0f0f0] pt-2 pb-3">
            <span className="border-x-[3px] border-b-[4px] border-x-transparent border-b-[#606060]" />
            <span className="border-x-[3px] border-t-[4px] border-x-transparent border-t-[#606060]" />
          </div>
        </div>
        <div className="flex h-[18px] items-start pl-0.5 text-[10px] text-[#6e6e6e]">
          {["Trade", "Account History", "News", "Alerts", "Mailbox", "Experts", "Journal"].map((t, i) => (
            <React.Fragment key={t}>
              <button
                onClick={() => setTab(t)}
                className={t === tab ? "h-[18px] border-x border-b-2 border-black bg-white px-[9px] leading-4 text-black" : "px-2.5 leading-4"}
              >
                {t}
              </button>
              {i > 0 && <span className="mt-[3px] h-3 w-px bg-[#555]" />}
            </React.Fragment>
          ))}
        </div>
      </div>
    </section>
  );
}

function StatusBar() {
  const cell = "flex h-[18px] items-center border-l border-[#a0a0a0] pl-[5px]";
  return (
    <footer className="flex h-[22px] items-center border-t border-[#a0a0a0] pt-0.5 text-[11px]">
      <span className="flex-1 pl-0.5">For Help, press F1</span>
      <span className={`${cell} w-[116px]`}>Default</span>
      <span className={`${cell} w-[102px]`}>2011.05.05 20:00</span>
      <span className={`${cell} w-[71px]`}>O: 1.45252</span>
      <span className={`${cell} w-[71px]`}>H: 1.45635</span>
      <span className={`${cell} w-[68px]`}>L: 1.45216</span>
      <span className={`${cell} w-[71px]`}>C: 1.45570</span>
      <span className={`${cell} w-[65px]`}>V: 10974</span>
      <span className={`${cell} w-[162px]`}>
        <svg width="24" height="13" viewBox="0 0 24 13" shapeRendering="crispEdges">
          {[0, 1, 2, 3, 4, 5, 6, 7].map((i) => (
            <g key={i}>
              <rect x={i * 3} y="0" width="2" height={10 - i} fill="#5f8a12" />
              <rect x={i * 3} y={11 - i} width="2" height={2 + i} fill="#a5230c" />
            </g>
          ))}
        </svg>
        <span className="ml-[38px]">33073/6 kb</span>
      </span>
    </footer>
  );
}

export default function App() {
  return (
    <div className="flex min-h-screen flex-col bg-black px-2 pt-[30px] pb-2 font-['Open_Sans','Noto_Sans',sans-serif] text-black">
      <div className="flex flex-1 flex-col bg-[#f0f0f0]">
        <nav className="flex h-[21px] items-center gap-[17px] pl-[7px] font-['DejaVu_Sans_Condensed','Open_Sans',sans-serif] text-[11px]">
          {["File", "View", "Insert", "Charts", "Tools", "Window", "Help"].map((m) => (
            <button key={m}>{m}</button>
          ))}
        </nav>
        <Toolbar />
        <div className="flex flex-1">
          <Navigator />
          <Workspace />
        </div>
        <Terminal />
        <StatusBar />
      </div>
    </div>
  );
}
